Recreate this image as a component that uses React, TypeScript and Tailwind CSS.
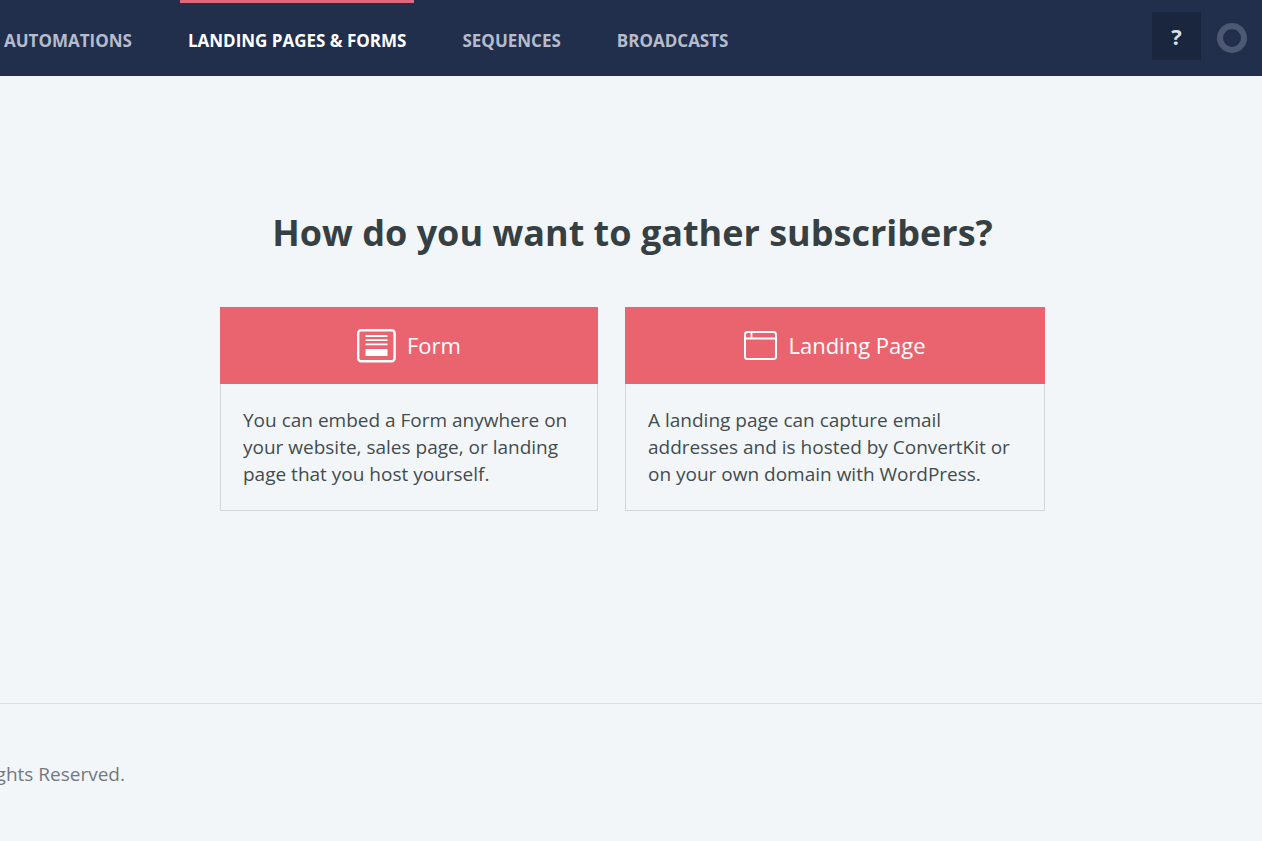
import type { ReactNode } from "react";
import clsx from "clsx";

const navItems = [
  { label: "Automations", active: false },
  { label: "Landing Pages & Forms", active: true },
  { label: "Sequences", active: false },
  { label: "Broadcasts", active: false },
];

function FormIcon() {
  return (
    <svg width="39" height="34" viewBox="0 0 39 34" fill="none" aria-hidden="true">
      <rect x="1.2" y="1.2" width="36.4" height="31" rx="3" stroke="white" strokeWidth="2.4" />
      <path d="M8.5 7h22M8.5 11.2h22M8.5 15.4h22" stroke="white" strokeWidth="1.8" />
      <rect x="8.5" y="20" width="22" height="7" fill="white" />
    </svg>
  );
}

function LandingPageIcon() {
  return (
    <svg width="33" height="30" viewBox="0 0 33 30" fill="none" aria-hidden="true">
      <rect x="1" y="1" width="31" height="27" rx="2.5" stroke="white" strokeWidth="2" />
      <path d="M1 7.5h31M7.5 1v6.5" stroke="white" strokeWidth="1.8" />
    </svg>
  );
}

function Header() {
  return (
    <header className="flex h-[76px] items-center justify-between overflow-hidden bg-[#212f4d] pr-[15px]">
      <nav className="-ml-1 flex h-full gap-10">
        {navItems.map((item) => (
          <a
            key={item.label}
            href="#"
            className={clsx(
              "flex items-center border-t-[3px] px-2 pt-[3px] text-[17px] font-bold whitespace-nowrap uppercase",
              item.active
                ? "border-[#e0687a] text-white"
                : "border-transparent text-[#b6bccb]",
            )}
          >
            {item.label}
          </a>
        ))}
      </nav>
      <div className="flex h-full items-start gap-4 pt-3">
        <button
          type="button"
          aria-label="Help"
          className="h-12 w-[49px] bg-[#1a263e] text-[22px] font-bold text-[#dcdfe3]"
        >
          ?
        </button>
        <button
          type="button"
          aria-label="Account"
          className="mt-[11px] size-[30px] rounded-full border-6 border-[#4d5973]"
        />
      </div>
    </header>
  );
}

function OptionCard({
  icon,
  title,
  className,
  children,
}: {
  icon: ReactNode;
  title: string;
  className: string;
  children: ReactNode;
}) {
  return (
    <section className={clsx("flex flex-col", className)}>
      <button
        type="button"
        className="flex h-[77px] items-center justify-center gap-[11px] bg-[#ea646f] text-[22px] text-white"
      >
        {icon}
        {title}
      </button>
      <p className="grow border border-t-0 border-[#d0d7db] px-[22px] pt-[23px] pb-[22px] text-[19px] leading-[27px] text-[#434c4f]">
        {children}
      </p>
    </section>
  );
}

function App() {
  return (
    <div className="flex min-h-screen flex-col bg-[#f2f6f9] font-['Open_Sans','Noto_Sans',sans-serif]">
      <Header />
      <main className="flex flex-col items-center pt-[132px] pb-48 pl-[3px]">
        <h1 className="text-center text-4xl leading-[50px] font-bold text-[#363f42]">
          How do you want to gather subscribers?
        </h1>
        <div className="mt-[49px] flex w-full max-w-[825px] gap-[27px]">
          <OptionCard icon={<FormIcon />} title="Form" className="flex-[378]">
            You can embed a Form anywhere on your website, sales page, or
            landing page that you host yourself.
          </OptionCard>
          <OptionCard
            icon={<LandingPageIcon />}
            title="Landing Page"
            className="flex-[420]"
          >
            A landing page can capture email addresses and is hosted by
            ConvertKit or on your own domain with WordPress.
          </OptionCard>
        </div>
      </main>
      <footer className="grow border-t border-[#d9dfe3] py-14">
        <p className="flex w-[125px] justify-end overflow-hidden text-[19px] leading-7 whitespace-nowrap text-[#73797d]">
          ghts Reserved.
        </p>
      </footer>
    </div>
  );
}

export default App;
